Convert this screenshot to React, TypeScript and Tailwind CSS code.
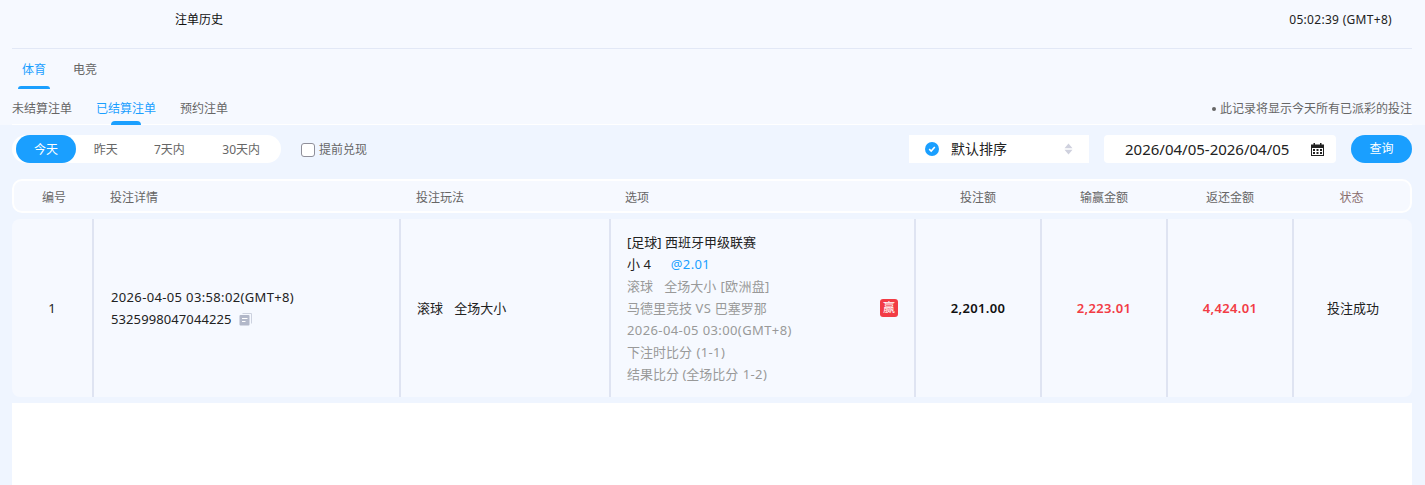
const font = "font-['Noto_Sans','Noto_Sans_CJK_SC',sans-serif]";

const columns = ["编号", "投注详情", "投注玩法", "选项", "投注额", "输赢金额", "返还金额", "状态"];
const headCols = "grid grid-cols-[80px_306px_209px_306px_126px_126px_126px_1fr]";
const rowCols = "grid grid-cols-[82px_307px_210px_305px_126px_126px_126px_1fr]";

function Calendar() {
  return (
    <svg width="15" height="15" viewBox="0 0 15 15" className="text-[#222]">
      <path d="M1 2.500h13V14H1z" fill="currentColor" />
      <path d="M2 6h11v7H2z" fill="#fff" />
      <path d="M3.500 1h1.500v3.500H3.500zM10 1h1.500v3.500H10z" fill="currentColor" />
      <path d="M3 7h2v2H3zM6.500 7h2v2h-2zM10 7h2v2h-2zM3 10h2v2H3zM6.500 10h2v2h-2zM10 10h2v2h-2z" fill="currentColor" />
    </svg>
  );
}

function SortArrows() {
  return (
    <svg width="9" height="12" viewBox="0 0 9 12">
      <path d="M4.500 0.500 8.500 5.300H0.500zM0.500 6.700H8.500L4.500 11.500z" fill="#cfd1de" />
    </svg>
  );
}

function CopyIcon() {
  return (
    <svg width="13" height="13" viewBox="0 0 13 13" className="ml-[7px] inline-block">
      <path d="M3.500 0.500h9v10" fill="none" stroke="#cdd2df" />
      <rect x="0.500" y="2" width="10" height="10.500" rx="1" fill="#b2b8c9" />
      <path d="M3 5.500h5.500M3 8.500h3.500" stroke="#fff" strokeWidth="1" />
    </svg>
  );
}

export default function App() {
  return (
    <div className={`${font} h-[485px] w-[1425px] overflow-hidden bg-[#f6f9ff] text-xs text-[#666]`}>
      {/* page head */}
      <div className="ml-3 mr-[13px] flex h-[49px] items-start justify-between border-b border-[#e2e8f6] pr-5 pt-3">
        <span className="ml-[163px] leading-4 text-[#111]">注单历史</span>
        <span className="leading-4 tracking-[0.3px] text-[#222]">05:02:39 (GMT+8)</span>
      </div>

      <div className="ml-3 flex h-10 gap-[27px] pl-2.5 pt-[13px]">
        <div className="relative h-[27px] leading-4 text-[#1a9fff]">
          体育
          <span className="absolute -left-1 bottom-0 h-[3px] w-8 rounded-t-sm bg-[#1a9fff]" />
        </div>
        <div className="leading-4">电竞</div>
      </div>

      <div className="ml-3 mr-[13px] flex h-9 items-start justify-between border-b border-white">
        <div className="flex gap-6 pt-3">
          <div className="leading-4">未结算注单</div>
          <div className="relative h-6 leading-4 text-[#1a9fff]">
            已结算注单
            <span className="absolute bottom-0 left-[15px] h-1 w-[30px] rounded-t-md bg-[#1a9fff]" />
          </div>
          <div className="leading-4">预约注单</div>
        </div>
        <div className="flex items-center gap-1 pt-3 leading-4">
          <span className="h-1 w-1 rounded-full bg-[#666]" />
          此记录将显示今天所有已派彩的投注
        </div>
      </div>

      <div className="h-[360px] bg-[#eff5ff] pl-3 pr-[13px]">
        {/* filters */}
        <div className="flex h-[54px] items-start pt-2.5">
          <div className="flex h-7 w-[269px] items-center rounded-full bg-white px-1">
            <div className="flex h-7 w-[60px] items-center justify-center rounded-full bg-[#1a9fff] pt-0.5 text-white">今天</div>
            <div className="w-[60px] pt-0.5 text-center">昨天</div>
            <div className="w-[64px] pl-1 pt-0.5 text-center">7天内</div>
            <div className="w-[78px] pl-1.5 pt-0.5 text-center">30天内</div>
          </div>
          <div className="ml-5 flex h-7 items-center gap-1 pt-0.5">
            <span className="h-3.5 w-3.5 rounded-[3px] border border-[#8f8f9a] bg-white" />
            提前兑现
          </div>
          <div className="ml-auto flex h-7 w-[180px] items-center bg-white px-4 text-sm text-[#222]">
            <span className="flex h-3.5 w-3.5 items-center justify-center rounded-full bg-[#1a9fff]">
              <svg width="8" height="8" viewBox="0 0 8 8">
                <path d="M1.200 4.200 3.200 6 6.800 2" fill="none" stroke="#fff" strokeWidth="1.600" />
              </svg>
            </span>
            <span className="ml-3 flex-1">默认排序</span>
            <SortArrows />
          </div>
          <div className="ml-[15px] flex h-7 w-[232px] items-center rounded bg-white pl-[21px] text-[15px] text-[#222]">
            <span className="flex-1">2026/04/05-2026/04/05</span>
            <span className="mr-[11px]"><Calendar /></span>
          </div>
          <button className="ml-[15px] h-7 w-[61px] rounded-full bg-[#1a9fff] text-white">查询</button>
        </div>

        {/* table head */}
        <div className={`${headCols} h-[34px] items-center rounded-[10px] border-2 border-white bg-[#f6f9ff] pt-[3px]`}>
          {columns.map((c, i) => (
            <div
              key={c}
              className={
                i === 0
                  ? "text-center"
                  : i < 4
                    ? "pl-4"
                    : i === 7
                      ? "text-center text-[#8a6d6d]"
                      : "text-center"
              }
            >
              {c}
            </div>
          ))}
        </div>

        {/* row */}
        <div className={`${rowCols} mt-1.5 h-[178px] rounded-lg bg-[#f6f9ff] text-[13px] leading-[22px] text-[#222]`}>
          <div className="flex items-center justify-center border-r-2 border-[#dfe4f2]">1</div>
          <div className="flex flex-col justify-center border-r-2 border-[#dfe4f2] pl-[17px]">
            <div className="tracking-[0.35px]">2026-04-05 03:58:02(GMT+8)</div>
            <div className="flex items-center tracking-[0.1px]">5325998047044225<CopyIcon /></div>
          </div>
          <div className="flex items-center border-r-2 border-[#dfe4f2] pl-4">滚球&nbsp;&nbsp;&nbsp;<span className="ml-px">全场大小</span></div>
          <div className="relative flex flex-col justify-center border-r-2 border-[#dfe4f2] pl-4 text-[#999]">
            <div className="text-[#222]">[足球] 西班牙甲级联赛</div>
            <div className="text-[#222]">
              小 4<span className="ml-5 tracking-[0.35px] text-[#1a9fff]">@2.01</span>
            </div>
            <div>滚球&nbsp;&nbsp;&nbsp;<span className="ml-px">全场大小</span> <span className="ml-px tracking-[0.3px]">[欧洲盘]</span></div>
            <div>马德里竞技 <span className="tracking-[0.5px]">VS</span> 巴塞罗那</div>
            <div className="tracking-[0.4px]">2026-04-05 03:00(GMT+8)</div>
            <div>下注时比分 <span className="ml-px tracking-[0.4px]">(1-1)</span></div>
            <div>结果比分 (全场比分 <span className="ml-px tracking-[0.4px]">1-2)</span></div>
            <span className="absolute right-4 top-[80px] flex h-[18px] w-[18px] items-center justify-center rounded-[3px] bg-[#f23c45] text-xs text-white">赢</span>
          </div>
          <div className="flex items-center justify-center border-r-2 border-[#dfe4f2] font-semibold tracking-[0.35px] text-[#111]">2,201.00</div>
          <div className="flex items-center justify-center border-r-2 border-[#dfe4f2] font-semibold tracking-[0.35px] text-[#f23c45]">2,223.01</div>
          <div className="flex items-center justify-center border-r-2 border-[#dfe4f2] font-semibold tracking-[0.35px] text-[#f23c45]">4,424.01</div>
          <div className="flex items-center justify-center">投注成功</div>
        </div>

        <div className="mt-1.5 h-[90px] bg-white" />
      </div>
    </div>
  );
}
